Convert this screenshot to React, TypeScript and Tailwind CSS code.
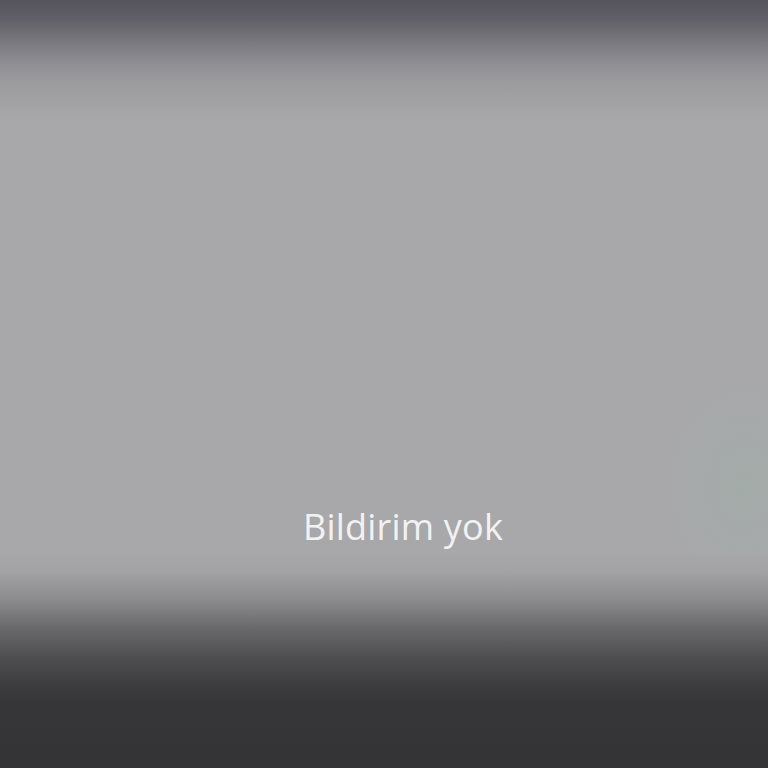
export default function App() {
  return (
    <div className="relative flex h-[768px] w-full flex-col overflow-hidden bg-[#a8a8aa] font-['Open_Sans',sans-serif]">
      <div className="h-[120px] bg-[linear-gradient(to_bottom,#55535e_0%,#626168_17%,#77767c_33%,#8c8b90_50%,#9b9b9e_67%,#a8a8aa_100%)]" />

      <div className="flex flex-1 flex-col items-center justify-end bg-[radial-gradient(ellipse_80px_100px_at_745px_365px,rgba(150,180,165,0.3),rgba(168,168,170,0))] pb-[8px]">
        <p className="pl-[38px] text-[36px] leading-[40px] tracking-[0.2px] text-[#f2f2f2]">
          Bildirim yok
        </p>
      </div>

      <div className="h-[213px] bg-[linear-gradient(to_bottom,#a7a7a9_0%,#a2a2a4_8%,#8e8e90_20%,#6a6a6c_34%,#4e4e50_48%,#3c3c3e_62%,#363638_70%,#343436_100%)]" />
    </div>
  );
}
